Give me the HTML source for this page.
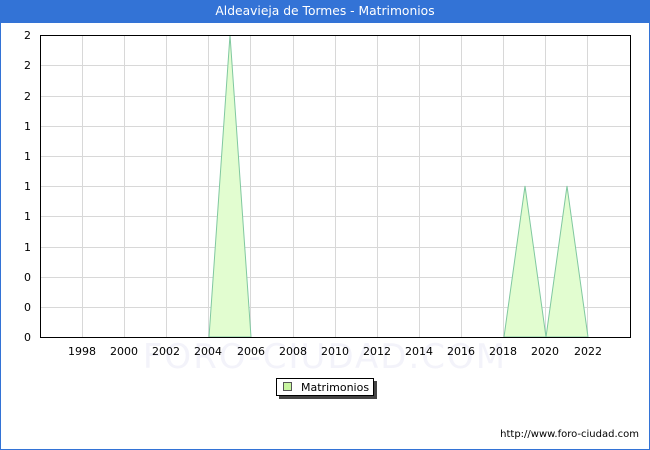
<!DOCTYPE html>
<html><head><meta charset="utf-8"><style>
html,body{margin:0;padding:0;background:#fff}
body{width:650px;height:450px;position:relative;overflow:hidden;font-family:"DejaVu Sans","Liberation Sans",sans-serif}
.frame{position:absolute;left:0;top:0;width:648px;height:448px;border:1px solid #3373d6}
.title{position:absolute;left:0;top:0;width:650px;height:23px;background:#3373d6;color:#fff;font-size:12.3px;text-align:center;line-height:23px}
</style></head><body>
<div class="frame"></div>
<div class="title">Aldeavieja de Tormes - Matrimonios</div>
<svg width="650" height="450" style="position:absolute;left:0;top:0" font-family="DejaVu Sans, Liberation Sans, sans-serif" font-size="11">
<text x="325" y="368" text-anchor="middle" font-size="34" fill="#f3f3fa" letter-spacing="2">FORO-CIUDAD.COM</text>
<g stroke="#d8d8d8" stroke-width="1">
<line x1="40" y1="65.5" x2="630" y2="65.5"/><line x1="40" y1="96.5" x2="630" y2="96.5"/><line x1="40" y1="126.5" x2="630" y2="126.5"/><line x1="40" y1="156.5" x2="630" y2="156.5"/><line x1="40" y1="186.5" x2="630" y2="186.5"/><line x1="40" y1="216.5" x2="630" y2="216.5"/><line x1="40" y1="247.5" x2="630" y2="247.5"/><line x1="40" y1="277.5" x2="630" y2="277.5"/><line x1="40" y1="307.5" x2="630" y2="307.5"/>
<line x1="82.5" y1="35" x2="82.5" y2="337"/><line x1="124.5" y1="35" x2="124.5" y2="337"/><line x1="166.5" y1="35" x2="166.5" y2="337"/><line x1="208.5" y1="35" x2="208.5" y2="337"/><line x1="250.5" y1="35" x2="250.5" y2="337"/><line x1="293.5" y1="35" x2="293.5" y2="337"/><line x1="335.5" y1="35" x2="335.5" y2="337"/><line x1="377.5" y1="35" x2="377.5" y2="337"/><line x1="419.5" y1="35" x2="419.5" y2="337"/><line x1="461.5" y1="35" x2="461.5" y2="337"/><line x1="503.5" y1="35" x2="503.5" y2="337"/><line x1="545.5" y1="35" x2="545.5" y2="337"/><line x1="587.5" y1="35" x2="587.5" y2="337"/>
</g>
<g fill="#e2fdd0" stroke="#80c8a0" stroke-width="1">
<polygon points="209,337 230,35 251,337"/>
<polygon points="504,337 525,186 546,337"/>
<polygon points="546,337 567,186 588,337"/>
</g>
<rect x="40.5" y="35.5" width="590" height="302" fill="none" stroke="#000" stroke-width="1"/>
<g text-anchor="end" fill="#000">
<text x="31" y="39">2</text><text x="31" y="69">2</text><text x="31" y="100">2</text><text x="31" y="130">1</text><text x="31" y="160">1</text><text x="31" y="190">1</text><text x="31" y="220">1</text><text x="31" y="251">1</text><text x="31" y="281">0</text><text x="31" y="311">0</text><text x="31" y="341">0</text>
</g>
<g text-anchor="middle" fill="#000">
<text x="82" y="355">1998</text><text x="124" y="355">2000</text><text x="166" y="355">2002</text><text x="208" y="355">2004</text><text x="251" y="355">2006</text><text x="293" y="355">2008</text><text x="335" y="355">2010</text><text x="377" y="355">2012</text><text x="419" y="355">2014</text><text x="461" y="355">2016</text><text x="503" y="355">2018</text><text x="545" y="355">2020</text><text x="588" y="355">2022</text>
</g>
<rect x="279" y="381" width="98" height="18" fill="#444"/>
<rect x="276.5" y="378.5" width="97" height="17" fill="#fff" stroke="#000"/>
<rect x="283.5" y="382.5" width="8" height="8" fill="#c8f5a0" stroke="#555"/>
<text x="301" y="391" fill="#000">Matrimonios</text>
<text x="639" y="437" text-anchor="end" font-size="10" fill="#000">http://www.foro-ciudad.com</text>
</svg>
</body></html>
